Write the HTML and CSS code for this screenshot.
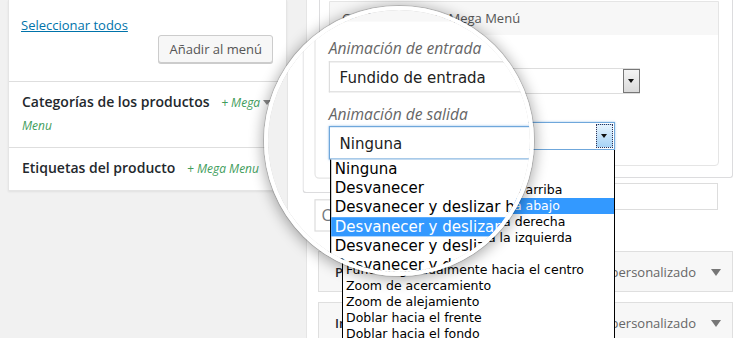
FILE: index.html
```html
<!DOCTYPE html>
<html lang="es">
<head>
<meta charset="utf-8">
<title>Mega Menu</title>
<link rel="stylesheet" href="styles.css">
</head>
<body>
<div class="stage">
  <div class="page">
    <aside class="side">
      <div class="side-top">
        <a class="select-all" href="#">Seleccionar todos</a>
        <div class="btn-row"><span class="btn">Añadir al menú</span></div>
      </div>
      <div class="acc">
        <div class="acc-title">Categorías de los productos <span class="mega">+ Mega Menu</span></div>
        <span class="caret"></span>
      </div>
      <div class="acc acc-last">
        <div class="acc-title">Etiquetas del producto <span class="mega">+ Mega Menu</span></div>
        <span class="caret caret-none"></span>
      </div>
    </aside>
    <section class="mgmt">
      <div class="item-settings">
        <div class="mega-box">
          <div class="mega-head">Configuración de Mega Menú</div>
          <div class="mega-body">
            <div class="field-label">Animación de entrada</div>
            <div class="sel sel-a"><span class="sel-text">Fundido de entrada</span><span class="sel-btn"></span></div>
            <div class="field-label field-label-2">Animación de salida</div>
            <div class="sel-wrap">
              <div class="sel sel-b"><span class="sel-text">Ninguna</span><span class="sel-btn sel-btn-focus"></span></div>
              <ul class="dropdown">
                <li>Ninguna</li>
                <li>Desvanecer</li>
                <li>Desvanecer y deslizar hacia arriba</li>
                <li class="hl">Desvanecer y deslizar hacia abajo</li>
                <li>Desvanecer y deslizar a la derecha</li>
                <li>Desvanecer y deslizar a la izquierda</li>
                <li>Rebotar</li>
                <li>Fundido gradualmente hacia el centro</li>
                <li>Zoom de acercamiento</li>
                <li>Zoom de alejamiento</li>
                <li>Doblar hacia el frente</li>
                <li>Doblar hacia el fondo</li>
              </ul>
            </div>
          </div>
        </div>
      </div>
      <div class="css-field">Clases CSS</div>
      <div class="item-bar"><span class="item-title">Productos</span><span class="item-type">Enlace personalizado</span><span class="item-arrow"></span></div>
      <div class="item-bar item-bar-2"><span class="item-title">Inicio</span><span class="item-type">Enlace personalizado</span><span class="item-arrow"></span></div>
    </section>
  </div>

  <div class="lens">
    <div class="lens-view">
      <div class="page">
        <aside class="side">
          <div class="side-top">
            <a class="select-all" href="#">Seleccionar todos</a>
            <div class="btn-row"><span class="btn">Añadir al menú</span></div>
          </div>
          <div class="acc">
            <div class="acc-title">Categorías de los productos <span class="mega">+ Mega Menu</span></div>
            <span class="caret"></span>
          </div>
          <div class="acc acc-last">
            <div class="acc-title">Etiquetas del producto <span class="mega">+ Mega Menu</span></div>
            <span class="caret caret-none"></span>
          </div>
        </aside>
        <section class="mgmt">
          <div class="item-settings">
            <div class="mega-box">
              <div class="mega-head">Configuración de Mega Menú</div>
              <div class="mega-body">
                <div class="field-label">Animación de entrada</div>
                <div class="sel sel-a"><span class="sel-text">Fundido de entrada</span><span class="sel-btn"></span></div>
                <div class="field-label field-label-2">Animación de salida</div>
                <div class="sel-wrap">
                  <div class="sel sel-b"><span class="sel-text">Ninguna</span><span class="sel-btn sel-btn-focus"></span></div>
                  <ul class="dropdown">
                    <li>Ninguna</li>
                    <li>Desvanecer</li>
                    <li>Desvanecer y deslizar hacia arriba</li>
                    <li class="hl">Desvanecer y deslizar hacia abajo</li>
                    <li>Desvanecer y deslizar a la derecha</li>
                    <li>Desvanecer y deslizar a la izquierda</li>
                    <li>Rebotar</li>
                    <li>Fundido gradualmente hacia el centro</li>
                    <li>Zoom de acercamiento</li>
                    <li>Zoom de alejamiento</li>
                    <li>Doblar hacia el frente</li>
                    <li>Doblar hacia el fondo</li>
                  </ul>
                </div>
              </div>
            </div>
          </div>
          <div class="css-field">Clases CSS</div>
          <div class="item-bar"><span class="item-title">Productos</span><span class="item-type">Enlace personalizado</span><span class="item-arrow"></span></div>
          <div class="item-bar item-bar-2"><span class="item-title">Inicio</span><span class="item-type">Enlace personalizado</span><span class="item-arrow"></span></div>
        </section>
      </div>
    </div>
  </div>
</div>
</body>
</html>
```

FILE: styles.css
```css
* { box-sizing: border-box; }

body {
  margin: 0;
  background: #f1f1f1;
  font-family: "Open Sans", "Noto Sans", sans-serif;
}

.stage {
  position: relative;
  width: 738px;
  height: 338px;
  overflow: hidden;
  background: #f1f1f1;
}

.page {
  display: flex;
  align-items: stretch;
  width: 738px;
  height: 338px;
  background: #f1f1f1;
}

/* ---------- left panel ---------- */
.side {
  align-self: flex-start;
  margin-left: 8px;
  width: 279px;
  background: #fff;
  border: 1px solid #e5e5e5;
  border-top: 0;
  box-shadow: 0 1px 2px rgba(0, 0, 0, 0.07);
}

.side-top {
  padding: 15px 13px 18px 12px;
  border-bottom: 1px solid #dedede;
}

.select-all {
  display: block;
  font-size: 13px;
  line-height: 20px;
  color: #0073aa;
  text-decoration: underline;
}

.btn-row {
  display: flex;
  justify-content: flex-end;
}

.btn {
  display: inline-block;
  height: 28px;
  padding: 0 10px;
  font-size: 13px;
  line-height: 26px;
  color: #555;
  background: #f7f7f7;
  border: 1px solid #ccc;
  border-radius: 3px;
  box-shadow: 0 1px 0 #ccc;
}

.acc {
  display: flex;
  align-items: flex-start;
  padding: 9px 14px 10px 13px;
  border-bottom: 1px solid #dedede;
}

.acc-last { border-bottom: 0; }

.acc-title {
  flex: 1;
  font-size: 14px;
  font-weight: 600;
  line-height: 22px;
  color: #23282d;
}

.mega {
  margin-left: 8px;
  font-size: 12px;
  font-weight: 400;
  font-style: italic;
  color: #3f9d5c;
}

.caret {
  flex: none;
  width: 10px;
  height: 22px;
  position: relative;
}

.caret::after {
  content: "";
  position: absolute;
  left: 1px;
  top: 9px;
  border-left: 4px solid transparent;
  border-right: 4px solid transparent;
  border-top: 5px solid #888;
}

.caret-none::after { display: none; }

/* ---------- menu management ---------- */
.mgmt {
  flex: 1;
  margin-left: 19px;
  background: #fff;
  border-left: 1px solid #e5e5e5;
}

.item-settings {
  margin-left: 12px;
  width: 414px;
  padding: 1px 13px 11px 9px;
  background: #fff;
  border: 1px solid #dcdcde;
  border-top: 0;
  border-radius: 0 0 3px 3px;
}

.mega-box {
  border: 1px solid #e5e5e5;
  border-radius: 0 0 4px 4px;
}

.mega-head {
  height: 33px;
  padding-left: 12px;
  font-size: 13px;
  line-height: 33px;
  color: #555;
  background: #f7f7f7;
}

.mega-body {
  padding: 13px 12px 15px 11px;
}

.field-label {
  font-size: 13px;
  font-style: italic;
  line-height: 18px;
  color: #666;
}

.field-label-2 { margin-top: 9px; }

.sel {
  display: flex;
  align-items: stretch;
  background: #fff;
  font-family: "DejaVu Sans", Verdana, sans-serif;
  font-size: 12.5px;
  color: #222;
}

.sel-text {
  flex: 1;
  padding-left: 8px;
  display: flex;
  align-items: center;
}

.sel-a {
  margin-top: 2px;
  width: 299px;
  height: 26px;
  border: 1px solid #ddd;
  border-right: 0;
}

.sel-btn {
  flex: none;
  width: 17px;
  position: relative;
  background: linear-gradient(#f4f4f4, #dadada);
  border: 1px solid #777;
}

.sel-btn::after {
  content: "";
  position: absolute;
  left: 4px;
  top: 50%;
  margin-top: -2px;
  border-left: 3.5px solid transparent;
  border-right: 3.5px solid transparent;
  border-top: 4px solid #111;
}

.sel-wrap {
  position: relative;
  margin-top: 1px;
  width: 274px;
}

.sel-b {
  height: 28px;
  border: 1px solid #6fa7db;
  box-shadow: 0 0 2px rgba(80, 150, 220, 0.6);
}

.sel-btn-focus {
  background: linear-gradient(#e6f3fd, #a6d3f6);
  border: 1px dotted #335;
  margin: 1px;
}

.dropdown {
  position: absolute;
  z-index: 5;
  top: 28px;
  left: 1px;
  width: 273px;
  margin: 0;
  padding: 0;
  list-style: none;
  background: #fff;
  border: 1px solid #000;
  border-top: 0;
  font-family: "DejaVu Sans", Verdana, sans-serif;
  font-size: 12.5px;
  line-height: 16px;
  color: #000;
}

.dropdown li {
  height: 16px;
  padding-left: 3px;
  white-space: nowrap;
  overflow: hidden;
}

.dropdown .hl {
  background: #3399ff;
  color: #fff;
}

.css-field {
  margin: 5px 0 0 22px;
  width: 389px;
  height: 27px;
  padding-left: 5px;
  font-size: 13px;
  line-height: 25px;
  color: #72777c;
  border: 1px solid #ddd;
}

.item-bar {
  display: flex;
  align-items: center;
  margin: 41px 0 0 11px;
  width: 415px;
  height: 41px;
  padding: 0 11px 0 16px;
  background: #f7f7f7;
  border: 1px solid #dfdfdf;
}

.item-bar-2 { margin-top: 10px; }

.item-title {
  font-size: 13px;
  font-weight: 600;
  color: #23282d;
}

.item-type {
  margin-left: auto;
  font-size: 13px;
  color: #666;
}

.item-arrow {
  position: relative;
  width: 10px;
  height: 10px;
  margin-left: 15px;
}

.item-arrow::after {
  content: "";
  position: absolute;
  left: 0;
  top: 2px;
  border-left: 5px solid transparent;
  border-right: 5px solid transparent;
  border-top: 7px solid #777;
}

/* ---------- magnifier lens ---------- */
.lens {
  position: absolute;
  left: 264px;
  top: 6px;
  width: 270px;
  height: 270px;
  border-radius: 50%;
  overflow: hidden;
  border: 4px solid #fff;
  box-shadow: 0 0 0 1px rgba(0, 0, 0, 0.16), 0 2px 14px 2px rgba(0, 0, 0, 0.32),
    inset 0 0 0 1px rgba(0, 0, 0, 0.15), inset 0 0 8px rgba(0, 0, 0, 0.25);
  z-index: 10;
}

.lens-view {
  position: absolute;
  left: -268px;
  top: -10px;
  width: 738px;
  height: 338px;
  transform-origin: 402px 102px;
  transform: scale(1.2);
}
```
